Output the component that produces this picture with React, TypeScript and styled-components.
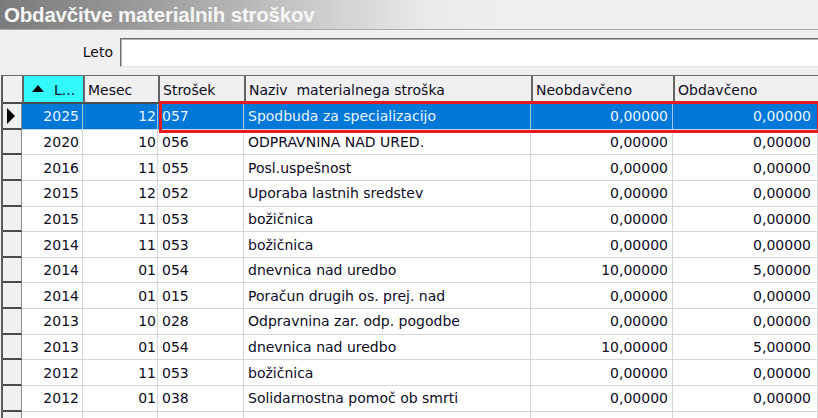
import React from "react";
import styled, { createGlobalStyle, css } from "styled-components";

const GlobalStyle = createGlobalStyle`
  html, body { margin: 0; padding: 0; background: #f0f0f0; overflow: hidden; }
  * { box-sizing: border-box; }
`;

const COLS = "19px 61px 75px 86px 287px 142px 1fr";
const FONT = `"DejaVu Sans", Verdana, sans-serif`;

const Window = styled.div`
  width: 818px;
  height: 418px;
  overflow: hidden;
  background: #f0f0f0;
  display: flex;
  flex-direction: column;
  font-family: ${FONT};
`;

const TitleBar = styled.div`
  height: 30px;
  flex: none;
  border-bottom: 1px solid #a9a9a9;
  background: linear-gradient(90deg, #7a7a7a 0px, #a2a2a2 170px, #cdcdcd 320px, #eaeaea 430px, #f0f0f0 520px);
  padding-left: 4px;
  display: flex;
  align-items: center;
  font-family: "Liberation Sans", Arial, sans-serif;
  font-weight: bold;
  font-size: 20.5px;
  color: #f6f6f6;
  letter-spacing: -0.2px;
`;

const FormRow = styled.div`
  flex: none;
  height: 45px;
  display: flex;
  align-items: flex-start;
  padding-top: 8px;
`;

const Label = styled.label`
  width: 114px;
  text-align: right;
  font-size: 14px;
  color: #111;
  line-height: 29px;
  padding-right: 1px;
`;

const Input = styled.div`
  margin-left: 6px;
  flex: 1;
  height: 29px;
  background: #fff;
  border-style: solid;
  border-width: 1px 0 1px 1px;
  border-color: #6d6d6d #e3e3e3 #e3e3e3 #6d6d6d;
  box-shadow: inset 1px 1px 0 #b4b4b4;
`;

const GridWrap = styled.div`
  position: relative;
  flex: 1;
  margin-left: 1px;
  border-top: 1px solid #6a6a6a;
  border-left: 2px solid #5c5c5c;
  overflow: hidden;
`;

const Row = styled.div<{ $header?: boolean }>`
  display: grid;
  grid-template-columns: ${COLS};
  height: ${(p) => (p.$header ? "28px" : "25.65px")};
  font-size: 14px;
  color: #0c0c1e;
`;

const HeadCell = styled.div<{ $sorted?: boolean; $first?: boolean }>`
  background: ${(p) => (p.$sorted ? "#32fafa" : "#f0f0f0")};
  border-bottom: 2px solid #4a4a4a;
  border-left: ${(p) => (p.$first ? "none" : "2px solid #646464")};
  padding: 1px 0 0 3px;
  display: flex;
  align-items: center;
  white-space: nowrap;
  overflow: hidden;
  ${(p) =>
    p.$sorted &&
    css`
      gap: 10px;
      padding-left: 8px;
    `}
`;

const SortArrow = styled.span`
  width: 0;
  height: 0;
  border-left: 6px solid transparent;
  border-right: 6px solid transparent;
  border-bottom: 7px solid #000;
  margin-top: -2px;
`;

const Indicator = styled.div`
  background: #f0f0f0;
  border-bottom: 2px solid #4a4a4a;
  border-right: 1px solid #8a8a8a;
  display: flex;
  align-items: center;
  padding-left: 4px;
`;

const Pointer = styled.span`
  width: 0;
  height: 0;
  border-top: 8px solid transparent;
  border-bottom: 8px solid transparent;
  border-left: 8px solid #000;
`;

const Cell = styled.div<{ $right?: boolean; $selected?: boolean; $pr?: number }>`
  background: ${(p) => (p.$selected ? "#0078d7" : "#fff")};
  color: ${(p) => (p.$selected ? "#eaf3fc" : "inherit")};
  border-bottom: 1px solid ${(p) => (p.$selected ? "#c9d9ea" : "#d6d6d6")};
  border-right: 1px solid ${(p) => (p.$selected ? "#a9c6e4" : "#d6d6d6")};
  display: flex;
  align-items: center;
  justify-content: ${(p) => (p.$right ? "flex-end" : "flex-start")};
  padding: 0 ${(p) => (p.$right ? `${p.$pr ?? 3}px` : "0")} 0 ${(p) => (p.$right ? "0" : "4px")};
  white-space: nowrap;
  overflow: hidden;
`;

const Highlight = styled.div`
  position: absolute;
  left: 156px;
  top: 25px;
  width: 661px;
  height: 32px;
  border: 3px solid #e41c22;
  pointer-events: none;
`;

type R = [string, string, string, string, string, string];

const rows: R[] = [
  ["2025", "12", "057", "Spodbuda za specializacijo", "0,00000", "0,00000"],
  ["2020", "10", "056", "ODPRAVNINA NAD URED.", "0,00000", "0,00000"],
  ["2016", "11", "055", "Posl.uspešnost", "0,00000", "0,00000"],
  ["2015", "12", "052", "Uporaba lastnih sredstev", "0,00000", "0,00000"],
  ["2015", "11", "053", "božičnica", "0,00000", "0,00000"],
  ["2014", "11", "053", "božičnica", "0,00000", "0,00000"],
  ["2014", "01", "054", "dnevnica nad uredbo", "10,00000", "5,00000"],
  ["2014", "01", "015", "Poračun drugih os. prej. nad", "0,00000", "0,00000"],
  ["2013", "10", "028", "Odpravnina zar. odp. pogodbe", "0,00000", "0,00000"],
  ["2013", "01", "054", "dnevnica nad uredbo", "10,00000", "5,00000"],
  ["2012", "11", "053", "božičnica", "0,00000", "0,00000"],
  ["2012", "01", "038", "Solidarnostna pomoč ob smrti", "0,00000", "0,00000"],
  ["", "", "", "", "", ""],
];

export default function App() {
  return (
    <>
      <GlobalStyle />
      <Window>
        <TitleBar>Obdavčitve materialnih stroškov</TitleBar>
        <FormRow>
          <Label>Leto</Label>
          <Input />
        </FormRow>
        <GridWrap>
          <Row $header>
            <HeadCell $first />
            <HeadCell $sorted>
              <SortArrow />
              <span>L...</span>
            </HeadCell>
            <HeadCell>Mesec</HeadCell>
            <HeadCell>Strošek</HeadCell>
            <HeadCell>Naziv&nbsp; materialnega stroška</HeadCell>
            <HeadCell>Neobdavčeno</HeadCell>
            <HeadCell>Obdavčeno</HeadCell>
          </Row>
          {rows.map((r, i) => {
            const sel = i === 0;
            return (
              <Row key={i}>
                <Indicator>{sel && <Pointer />}</Indicator>
                <Cell $right $selected={sel} $pr={3}>{r[0]}</Cell>
                <Cell $right $selected={sel} $pr={1}>{r[1]}</Cell>
                <Cell $selected={sel}>{r[2]}</Cell>
                <Cell $selected={sel}>{r[3]}</Cell>
                <Cell $right $selected={sel} $pr={4}>{r[4]}</Cell>
                <Cell $right $selected={sel} $pr={6}>{r[5]}</Cell>
              </Row>
            );
          })}
          <Highlight />
        </GridWrap>
      </Window>
    </>
  );
}
